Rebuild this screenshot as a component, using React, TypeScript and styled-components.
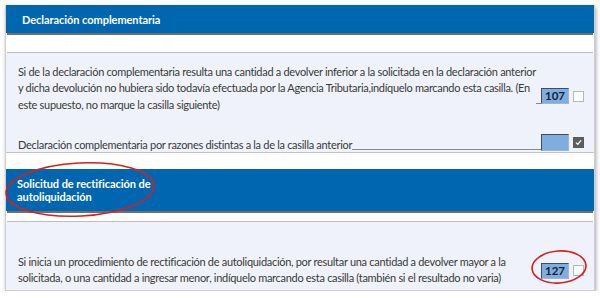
import React from "react";
import styled, { createGlobalStyle } from "styled-components";

const Global = createGlobalStyle`
  html, body { margin: 0; padding: 0; background: #ffffff; }
  body { font-family: "Lato", "Liberation Sans", sans-serif; }
`;

const Panel = styled.div`
  margin: 5px 0 0 5px;
  width: 588px;
  border: 1px solid #cfcfcf;
  border-top: none;
  box-shadow: 1px 2px 4px rgba(0, 0, 0, 0.35);
  background: #ffffff;
  position: relative;
`;

const Header = styled.div<{ $tall?: boolean }>`
  background: #0066b0;
  height: ${(p) => (p.$tall ? 42 : 28)}px;
  display: flex;
  align-items: center;
  padding-left: ${(p) => (p.$tall ? 11 : 16)}px;
  box-sizing: border-box;
`;

const HeaderTitle = styled.div<{ $wrap?: boolean }>`
  color: #ffffff;
  font-weight: 700;
  font-size: 11px;
  letter-spacing: -0.05px;
  line-height: 13px;
  max-width: ${(p) => (p.$wrap ? "145px" : "none")};
  white-space: ${(p) => (p.$wrap ? "normal" : "nowrap")};
`;

const Strip = styled.div<{ $h: number }>`
  height: ${(p) => p.$h}px;
  border-top: 2px solid #6f6f6f;
  border-bottom: 1px solid #bdbdbd;
  background: #ffffff;
  margin: 0 1px;
`;

const Body = styled.div<{ $pt: number; $h: number }>`
  background: #eff2fa;
  padding: ${(p) => p.$pt}px 10px 0 12px;
  height: ${(p) => p.$h}px;
  box-sizing: border-box;
  display: flex;
  flex-direction: column;
  color: #3a3a3a;
  font-size: 11px;
  letter-spacing: -0.3px;
`;

const Gap = styled.div`
  height: 16px;
  border-top: 1px solid #c4c4c4;
  background: #ffffff;
`;

const Row = styled.div<{ $mt?: number }>`
  display: flex;
  align-items: flex-end;
  margin-top: ${(p) => p.$mt ?? 0}px;
`;

const Para = styled.div`
  line-height: 16.4px;
  white-space: nowrap;
`;

const Label = styled.span`
  white-space: nowrap;
  line-height: 16px;
`;

const Leader = styled.div<{ $hidden?: boolean; $mb: number }>`
  flex: 1;
  min-width: 4px;
  border-bottom: 1px solid ${(p) => (p.$hidden ? "transparent" : "#8a8a8a")};
  margin-bottom: ${(p) => p.$mb}px;
`;

const Cell = styled.div<{ $mb: number }>`
  display: flex;
  align-items: center;
  margin-bottom: ${(p) => p.$mb}px;
`;

const CodeBox = styled.div<{ $tall?: boolean }>`
  width: 26px;
  height: ${(p) => (p.$tall ? 15 : 14)}px;
  background: #7fadde;
  border: 1px solid #3c4e66;
  border-right-color: #9bb6d6;
  border-bottom-color: #9bb6d6;
  color: #15233a;
  font-weight: 700;
  font-size: 11.5px;
  letter-spacing: 0;
  line-height: 14px;
  text-align: center;
`;

const Check = styled.div<{ $on?: boolean }>`
  width: 9px;
  height: 9px;
  margin-left: 4px;
  border: 1px solid ${(p) => (p.$on ? "#5a5a5a" : "#b8b8b8")};
  background: ${(p) => (p.$on ? "#5e5e5e" : "#ffffff")};
  display: flex;
  align-items: center;
  justify-content: center;
`;

const Ellipse = styled.svg<{ $x: number; $y: number; $w: number; $h: number }>`
  position: absolute;
  left: ${(p) => p.$x}px;
  top: ${(p) => p.$y}px;
  width: ${(p) => p.$w}px;
  height: ${(p) => p.$h}px;
  pointer-events: none;
  overflow: visible;
`;

function Mark({ x, y, w, h, tilt = 0 }: { x: number; y: number; w: number; h: number; tilt?: number }) {
  return (
    <Ellipse $x={x} $y={y} $w={w} $h={h} viewBox={`0 0 ${w} ${h}`}>
      <ellipse
        cx={w / 2}
        cy={h / 2}
        rx={w / 2 - 1}
        ry={h / 2 - 1}
        fill="none"
        stroke="#d81e1e"
        strokeWidth="1.6"
        transform={`rotate(${tilt} ${w / 2} ${h / 2})`}
      />
    </Ellipse>
  );
}

export default function App() {
  return (
    <>
      <Global />
      <Panel>
        <Header>
          <HeaderTitle>Declaración complementaria</HeaderTitle>
        </Header>
        <Strip $h={17} />
        <Body $pt={11} $h={99}>
          <Row>
            <Para>
              Si de la declaración complementaria resulta una cantidad a devolver inferior a la solicitada en la declaración anterior
              <br />
              y dicha devolución no hubiera sido todavía efectuada por la Agencia Tributaria,indíquelo marcando esta casilla. (En
              <br />
              este supuesto, no marque la casilla siguiente)
            </Para>
            <Leader $mb={9} />
            <Cell $mb={9}>
              <CodeBox>107</CodeBox>
              <Check />
            </Cell>
          </Row>
          <Row $mt={21}>
            <Label>Declaración complementaria por razones distintas a la de la casilla anterior</Label>
            <Leader $mb={3} />
            <Cell $mb={2}>
              <CodeBox $tall />
              <Check $on>
                <svg width="7" height="7" viewBox="0 0 7 7">
                  <path d="M1 3.6 L2.8 5.4 L6 1.4" stroke="#ffffff" strokeWidth="1.3" fill="none" />
                </svg>
              </Check>
            </Cell>
          </Row>
        </Body>
        <Gap />
        <Header $tall>
          <HeaderTitle $wrap>Solicitud de rectificación de autoliquidación</HeaderTitle>
        </Header>
        <Strip $h={8} />
        <Body $pt={32} $h={68}>
          <Row>
            <Para>
              Si inicia un procedimiento de rectificación de autoliquidación, por resultar una cantidad a devolver mayor a la
              <br />
              solicitada, o una cantidad a ingresar menor, indíquelo marcando esta casilla (también si el resultado no varia)
            </Para>
            <Leader $hidden $mb={8} />
            <Cell $mb={8}>
              <CodeBox>127</CodeBox>
              <Check />
            </Cell>
          </Row>
        </Body>
        <Mark x={-1} y={157} w={150} h={55} tilt={-3} />
        <Mark x={525} y={245} w={56} h={34} tilt={-4} />
      </Panel>
    </>
  );
}
